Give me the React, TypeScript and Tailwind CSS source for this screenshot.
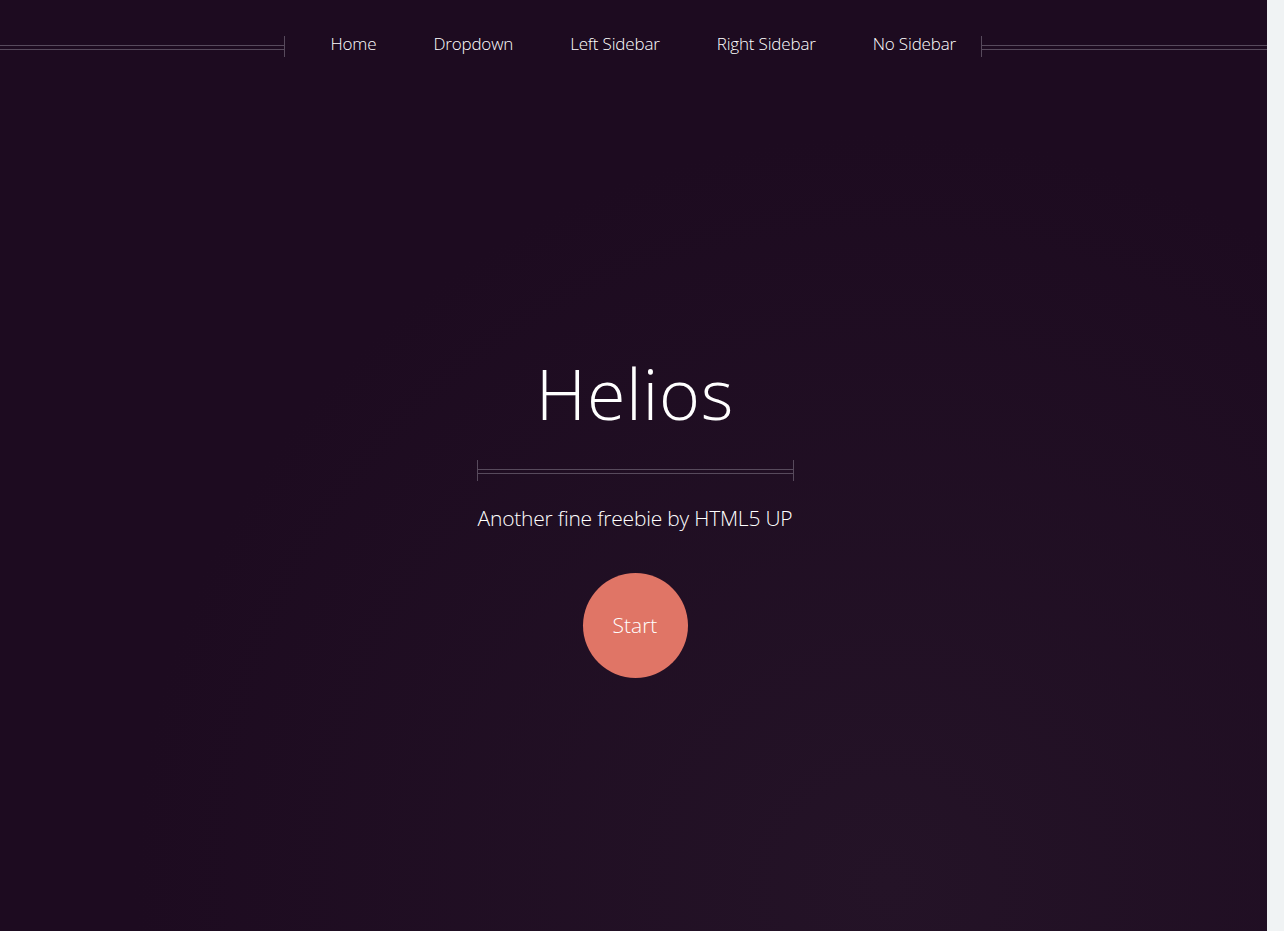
const DoubleLine = ({ tick }: { tick: "left" | "right" | "both" }) => (
    <div className="relative flex-1 h-[21px]">
        <div className="absolute inset-x-0 top-[9px] border-t border-[#574a5c]" />
        <div className="absolute inset-x-0 top-[13px] border-t border-[#574a5c]" />
        {(tick === "left" || tick === "both") && <div className="absolute left-0 top-0 h-full border-l border-[#574a5c]" />}
        {(tick === "right" || tick === "both") && <div className="absolute right-0 top-0 h-full border-r border-[#574a5c]" />}
    </div>
);

const links = ["Home", "Dropdown", "Left Sidebar", "Right Sidebar", "No Sidebar"];

export default function App() {
    return (
        <div className="flex h-[931px] w-full overflow-hidden" style={{ fontFamily: "'Open Sans', 'Noto Sans', sans-serif" }}>
            <div className="flex-1 flex flex-col bg-[#1d0b20] bg-[radial-gradient(ellipse_at_70%_95%,#241327_0%,#1d0b20_60%)] text-white">
                <nav className="flex items-center pt-[31px]">
                    <DoubleLine tick="right" />
                    <ul className="flex items-center gap-[57px] pl-[46px] pr-[25px] pb-[5px] text-[17px] font-light tracking-[-0.01em] text-white">
                        {links.map((l) => (
                            <li key={l}>{l}</li>
                        ))}
                    </ul>
                    <div className="w-[286px] flex"><DoubleLine tick="left" /></div>
                </nav>
                <div className="flex flex-col items-center pt-[296px] pl-[3px]">
                    <h1 className="text-[70px] leading-none font-light tracking-[0.01em]">Helios</h1>
                    <div className="w-[317px] flex mt-[32px]"><DoubleLine tick="both" /></div>
                    <p className="mt-[22px] text-[21px] font-light tracking-[-0.01em] text-white">Another fine freebie by HTML5 UP</p>
                    <button className="mt-[39px] w-[105px] h-[105px] rounded-full bg-[#e07566] text-[21px] font-light text-white">Start</button>
                </div>
            </div>
            <div className="w-[17px] bg-[#f0f3f4]" />
        </div>
    );
}
